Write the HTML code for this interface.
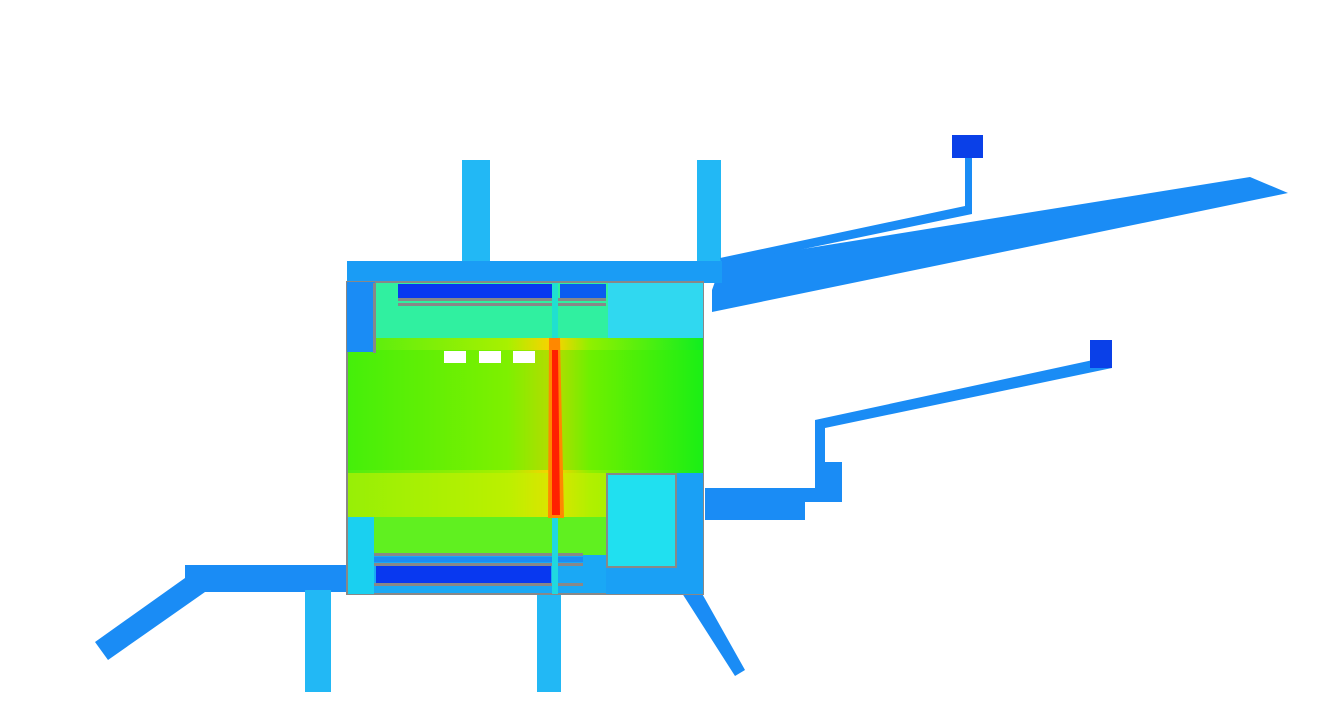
<!DOCTYPE html>
<html><head><style>html,body{margin:0;padding:0;background:#fff;width:1326px;height:718px;overflow:hidden}</style></head>
<body>
<svg width="1326" height="718" viewBox="0 0 1326 718" xmlns="http://www.w3.org/2000/svg">
<defs>
<linearGradient id="g1" x1="0" x2="1" y1="0" y2="0">
<stop offset="0" stop-color="#50ee10"/><stop offset="0.45" stop-color="#a8f000"/><stop offset="0.58" stop-color="#ffd000"/><stop offset="0.68" stop-color="#90f000"/><stop offset="1" stop-color="#10ee20"/>
</linearGradient>
</defs>
<g fill="#1a8cf5">
<rect x="462" y="160" width="28" height="102" fill="#22b8f5"/>
<rect x="697" y="160" width="24" height="102" fill="#22b8f5"/>
<polygon points="720,258 965,206 965,150 972,150 972,214 722,266"/>
<rect x="952" y="135" width="31" height="23" fill="#0a40e8"/>
<polygon points="712,290 712,312 1288,193 1250,177 722,262"/>
<polygon points="815,420 1093,360 1093,340 1112,340 1112,368 825,428 825,462 842,462 842,502 805,502 805,520 705,520 705,488 815,488"/>
<rect x="1090" y="340" width="22" height="28" fill="#0a40e8"/>
<polygon points="185,565 347,565 347,592 205,592 108,660 95,642 185,578"/>
<rect x="305" y="590" width="26" height="102" fill="#22b8f5"/>
<rect x="537" y="590" width="24" height="102" fill="#22b8f5"/>
<polygon points="680,590 700,590 745,670 735,676"/>
</g>
<rect x="347" y="261" width="375" height="22" fill="#1a9cf5"/>
<rect x="347" y="282" width="356" height="312" fill="#1aa8f5" stroke="#888" stroke-width="2"/>
<rect x="374" y="283" width="234" height="55" fill="#30f0a0"/>
<rect x="608" y="283" width="95" height="55" fill="#30d8f0"/>
<rect x="398" y="284" width="155" height="14" fill="#0838f0"/>
<rect x="560" y="284" width="46" height="14" fill="#0a5cf0"/>
<rect x="398" y="298" width="208" height="3" fill="#888"/>
<rect x="398" y="303" width="208" height="3" fill="#888"/>
<rect x="348" y="338" width="355" height="180" fill="url(#g1)"/>
<rect x="348" y="350" width="355" height="120" fill="#30f000" opacity="0.35"/>
<rect x="348" y="473" width="258" height="45" fill="#c8f000" opacity="0.6"/>
<rect x="374" y="517" width="232" height="38" fill="#60f020"/>
<rect x="348" y="517" width="26" height="77" fill="#1ad0f0"/>
<rect x="606" y="473" width="97" height="121" fill="#1aa0f5"/>
<rect x="607" y="474" width="69" height="93" fill="#20e0f0" stroke="#888" stroke-width="2"/>
<rect x="374" y="553" width="209" height="3" fill="#888"/>
<rect x="374" y="557" width="209" height="5" fill="#1a8cf5"/>
<rect x="374" y="563" width="209" height="3" fill="#888"/>
<rect x="376" y="566" width="175" height="17" fill="#0838f0"/>
<rect x="374" y="583" width="209" height="3" fill="#888"/>
<rect x="347" y="282" width="28" height="70" fill="#1a8cf5"/>
<rect x="373" y="283" width="3" height="70" fill="#888"/>
<polygon points="549,338 560,338 564,518 548,518" fill="#ff8800"/>
<polygon points="552,350 558,350 560,515 552,515" fill="#ff2000"/>
<rect x="552" y="283" width="6" height="55" fill="#20e0d0"/>
<rect x="552" y="518" width="6" height="76" fill="#20d8e0"/>
<rect x="444" y="351" width="22" height="12" fill="#fff"/>
<rect x="479" y="351" width="22" height="12" fill="#fff"/>
<rect x="513" y="351" width="22" height="12" fill="#fff"/>
</svg>
</body></html>
